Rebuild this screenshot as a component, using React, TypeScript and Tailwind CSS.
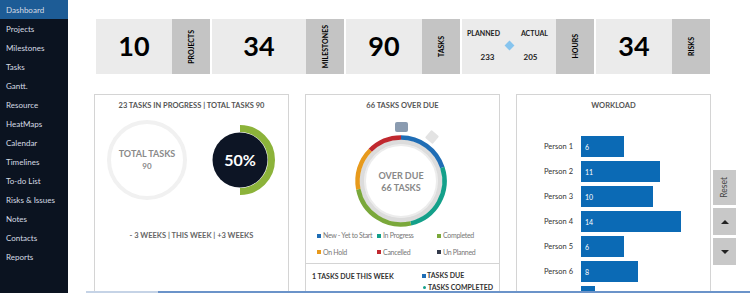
import React from "react";

const NAV = [
  "Dashboard",
  "Projects",
  "Milestones",
  "Tasks",
  "Gantt.",
  "Resource",
  "HeatMaps",
  "Calendar",
  "Timelines",
  "To-do List",
  "Risks & Issues",
  "Notes",
  "Contacts",
  "Reports",
];

// last row sits below the fold, its label is not visible
const WORKLOAD = [
  { name: "Person 1", value: 6 },
  { name: "Person 2", value: 11 },
  { name: "Person 3", value: 10 },
  { name: "Person 4", value: 14 },
  { name: "Person 5", value: 6 },
  { name: "Person 6", value: 8 },
  { name: "", value: 2 },
];

const FONT = "font-['Lato','Open_Sans',sans-serif]";

function arc(cx: number, cy: number, r: number, a0: number, a1: number) {
  const p = (a: number) => {
    const rad = ((a - 90) * Math.PI) / 180;
    return [cx + r * Math.cos(rad), cy + r * Math.sin(rad)];
  };
  const [x0, y0] = p(a0);
  const [x1, y1] = p(a1);
  const large = a1 - a0 > 180 ? 1 : 0;
  return `M ${x0} ${y0} A ${r} ${r} 0 ${large} 1 ${x1} ${y1}`;
}

function Kpi({ value, label, wide }: { value: string; label: string; wide?: boolean }) {
  return (
    <div className="flex h-[55px]">
      <div
        className={`flex items-center justify-center bg-[#ebebeb] text-[27px] font-bold text-black ${wide ? "w-[94px]" : "w-[76px]"}`}
      >
        {value}
      </div>
      <div className="flex w-[38px] items-center justify-center bg-[#c4c4c4]">
        <span className="rotate-180 text-[7px] font-bold text-black [writing-mode:vertical-rl]">{label}</span>
      </div>
    </div>
  );
}

function Hours() {
  return (
    <div className="flex h-[55px]">
      <div className="relative w-[94px] bg-[#ebebeb] text-[7px] font-bold text-[#222]">
        <div className="flex justify-between px-[5px] pt-[9px]">
          <span>PLANNED</span>
          <span className="pr-[3px]">ACTUAL</span>
        </div>
        <div className="flex justify-center pt-[3px]">
          <div className="h-[7px] w-[7px] rotate-45 bg-[#86c4ee]" />
        </div>
        <div className="flex justify-center gap-[29px] pt-[2px] text-[8px]">
          <span>233</span>
          <span>205</span>
        </div>
      </div>
      <div className="flex w-[38px] items-center justify-center bg-[#c4c4c4]">
        <span className="rotate-180 text-[7px] font-bold text-black [writing-mode:vertical-rl]">HOURS</span>
      </div>
    </div>
  );
}

function ProgressPanel() {
  return (
    <div className="flex h-[215px] w-[195px] flex-col items-center border border-[#d4d4d4] bg-white">
      <div className="pt-[5px] text-[7.5px] font-bold text-[#555]">23 TASKS IN PROGRESS | TOTAL TASKS 90</div>
      <div className="mt-[9px] flex w-full items-center justify-between pl-[12px] pr-[12px]">
        <div className="flex h-[80px] w-[80px] flex-col items-center justify-center rounded-full border-[4px] border-[#f1f1f1] text-[9px] font-bold leading-[12px] text-[#8a8a8a]">
          <span>TOTAL TASKS</span>
          <span className="text-[8px]">90</span>
        </div>
        <svg width="72" height="72" viewBox="0 0 72 72">
          <path d={arc(36, 36, 31.5, 0, 180)} stroke="#8cb33a" strokeWidth="7" fill="none" />
          <circle cx="36" cy="36" r="27.5" fill="#0d1525" />
          <text x="36" y="41.5" textAnchor="middle" fill="#fff" fontSize="16" fontWeight="700" fontFamily="Lato, sans-serif">
            50%
          </text>
        </svg>
      </div>
      <div className="mt-[30px] text-[7.5px] font-bold text-[#666]">- 3 WEEKS | THIS WEEK | +3 WEEKS</div>
    </div>
  );
}

const SEGMENTS = [
  { from: 0, to: 72, color: "#1f6db5" },
  { from: 72, to: 167, color: "#14a08a" },
  { from: 167, to: 259, color: "#7aa83a" },
  { from: 259, to: 315, color: "#e79a1c" },
  { from: 315, to: 360, color: "#c0282f" },
];

const LEGEND = [
  { label: "New - Yet to Start", color: "#1f6db5" },
  { label: "In Progress", color: "#14a08a" },
  { label: "Completed", color: "#7aa83a" },
  { label: "On Hold", color: "#e79a1c" },
  { label: "Cancelled", color: "#c0282f" },
  { label: "Un Planned", color: "#333a4a" },
];

function OverduePanel() {
  return (
    <div className="flex h-[215px] w-[195px] flex-col border border-[#d4d4d4] bg-white">
      <div className="pt-[5px] text-center text-[7.5px] font-bold text-[#555]">66 TASKS OVER DUE</div>
      <div className="flex justify-center pt-[9px]">
        <svg width="110" height="110" viewBox="0 0 110 110">
          <rect x="47" y="2" width="13" height="10" rx="2" fill="#8a9bb0" />
          <rect x="79" y="12" width="10" height="10" rx="1" fill="#e3e3e3" transform="rotate(40 84 17)" />
          <circle cx="53" cy="61" r="39" stroke="#dcdcdc" strokeWidth="5" fill="none" />
          <circle cx="53" cy="61" r="36" stroke="#ececec" strokeWidth="2" fill="none" />
          {SEGMENTS.map((s) => (
            <path key={s.from} d={arc(53, 61, 43.5, s.from, s.to)} stroke={s.color} strokeWidth="4.5" fill="none" />
          ))}
          <text x="53" y="59" textAnchor="middle" fill="#888" fontSize="9" fontWeight="700" fontFamily="Lato, sans-serif">
            OVER DUE
          </text>
          <text x="53" y="71" textAnchor="middle" fill="#888" fontSize="9" fontWeight="700" fontFamily="Lato, sans-serif">
            66 TASKS
          </text>
        </svg>
      </div>
      <div className="grid grid-cols-[60px_60px_60px] gap-y-[6px] pl-[11px] text-[7px] tracking-[-0.3px] text-[#777]">
        {LEGEND.map((l) => (
          <div key={l.label} className="flex items-center gap-[2px] whitespace-nowrap">
            <span className="h-[4px] w-[4px] shrink-0" style={{ background: l.color }} />
            {l.label}
          </div>
        ))}
      </div>
      <div className="mt-[6px] flex border-t border-[#d4d4d4] pt-[6px] pl-[6px]">
        <div className="w-[110px] pt-[1px] text-[7px] font-bold text-[#333]">1 TASKS DUE THIS WEEK</div>
        <div className="flex flex-col gap-[1px] text-[7px] font-bold text-[#333]">
          <div className="flex items-center gap-[1px]">
            <span className="h-[4px] w-[4px] bg-[#1f6db5]" />
            TASKS DUE
          </div>
          <div className="flex items-center gap-[2px]">
            <span className="ml-[1px] h-[3px] w-[3px] rounded-full bg-[#14a08a]" />
            TASKS COMPLETED
          </div>
        </div>
      </div>
    </div>
  );
}

function WorkloadPanel() {
  return (
    <div className="flex h-[215px] w-[195px] flex-col border border-[#d4d4d4] bg-white">
      <div className="pt-[5px] text-center text-[7.5px] font-bold text-[#555]">WORKLOAD</div>
      <div className="flex flex-col gap-[4px] pt-[25px]">
        {WORKLOAD.map((w, i) => (
          <div key={i} className="flex h-[21px] items-center">
            <span className="w-[64px] pr-[8px] text-right text-[7.5px] text-[#333]">{w.name}</span>
            <div
              className="flex h-[21px] items-center bg-[#0b6ab5] pl-[4px] text-[7px] text-white"
              style={{ width: `${w.value * 7.15}px` }}
            >
              {w.value > 3 ? w.value : ""}
            </div>
          </div>
        ))}
      </div>
    </div>
  );
}

function SideButtons() {
  return (
    <div className="flex w-[23px] flex-col gap-[3px] pt-[76px]">
      <div className="flex h-[35px] items-center justify-center bg-[#c8c8c8]">
        <span className="rotate-180 text-[8.5px] text-[#444] [writing-mode:vertical-rl]">Reset</span>
      </div>
      <div className="flex h-[27px] items-center justify-center bg-[#c8c8c8]">
        <span className="h-0 w-0 border-x-[4px] border-b-[4px] border-x-transparent border-b-[#222]" />
      </div>
      <div className="flex h-[27px] items-center justify-center bg-[#c8c8c8]">
        <span className="h-0 w-0 border-x-[4px] border-t-[4px] border-x-transparent border-t-[#222]" />
      </div>
    </div>
  );
}

export default function App() {
  return (
    <div className={`relative flex h-[293px] w-[750px] overflow-hidden bg-white ${FONT}`}>
      <nav className="flex w-[68px] flex-col bg-[#0b1320]">
        {NAV.map((n, i) => (
          <div
            key={n}
            className={`flex h-[19px] items-center pl-[6px] text-[8px] text-[#d5dbe4] ${i === 0 ? "bg-[#1d5c96]" : ""}`}
          >
            {n}
          </div>
        ))}
      </nav>
      <main className="flex flex-1 flex-col">
        <div className="flex gap-[2px] pl-[28px] pt-[19px]">
          <Kpi value="10" label="PROJECTS" />
          <Kpi value="34" label="MILESTONES" wide />
          <Kpi value="90" label="TASKS" />
          <Hours />
          <Kpi value="34" label="RISKS" />
        </div>
        <div className="flex pl-[26px] pt-[20px]">
          <ProgressPanel />
          <div className="ml-[16px]">
            <OverduePanel />
          </div>
          <div className="ml-[16px]">
            <WorkloadPanel />
          </div>
          <div className="ml-[2px]">
            <SideButtons />
          </div>
        </div>
      </main>
      <div className="absolute bottom-0 left-[86px] flex h-[2px] w-[664px]">
        <div className="w-[72px] bg-[#c5d3e6]" />
        <div className="flex-1 bg-[#6b93c9]" />
      </div>
    </div>
  );
}
